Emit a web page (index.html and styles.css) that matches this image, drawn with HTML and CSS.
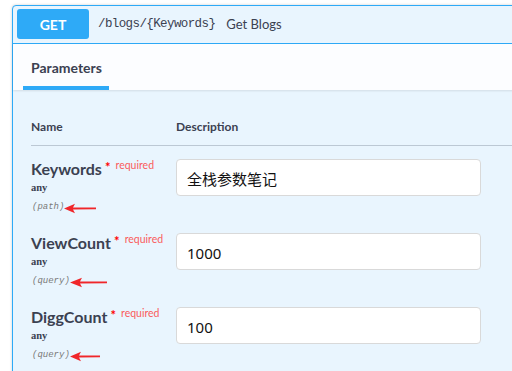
FILE: index.html
```html
<!DOCTYPE html>
<html>
<head>
<meta charset="utf-8">
<link rel="stylesheet" href="styles.css">
</head>
<body>
<div class="page">
  <div class="opblock">
    <div class="summary">
      <span class="method">GET</span>
      <span class="path">/blogs/{Keywords}</span>
      <span class="desc">Get Blogs</span>
    </div>
    <div class="tabs">
      <div class="tab">Parameters</div>
    </div>
    <div class="params">
      <div class="phead">
        <div class="col-name">Name</div>
        <div class="col-desc">Description</div>
      </div>
      <div class="rows">
        <div class="prow">
          <div class="pname">
            <div class="nm">Keywords<span class="star">&nbsp;*</span><span class="req">required</span></div>
            <div class="type">any</div>
            <div class="in">(path)<svg class="arrow" width="32" height="11" viewBox="0 0 32 11"><path d="M0 5.5 L11 0.8 L9 4.4 L32 4.6 L32 6.2 L9 6.6 L11 10.2 Z" fill="#f0262a"/></svg></div>
          </div>
          <div class="pval"><input class="field" type="text" value="全栈参数笔记"></div>
        </div>
        <div class="prow">
          <div class="pname">
            <div class="nm">ViewCount<span class="star">&nbsp;*</span><span class="req">required</span></div>
            <div class="type">any</div>
            <div class="in">(query)<svg class="arrow" width="37" height="11" viewBox="0 0 37 11"><path d="M0 5.5 L12 0.8 L10 4.4 L37 4.6 L37 6.2 L10 6.6 L12 10.2 Z" fill="#f0262a"/></svg></div>
          </div>
          <div class="pval"><input class="field" type="text" value="1000"></div>
        </div>
        <div class="prow">
          <div class="pname">
            <div class="nm">DiggCount<span class="star">&nbsp;*</span><span class="req">required</span></div>
            <div class="type">any</div>
            <div class="in">(query)<svg class="arrow" width="30" height="11" viewBox="0 0 30 11"><path d="M0 5.5 L11 0.8 L9 4.4 L30 4.6 L30 6.2 L9 6.6 L11 10.2 Z" fill="#f0262a"/></svg></div>
          </div>
          <div class="pval"><input class="field" type="text" value="100"></div>
        </div>
      </div>
    </div>
  </div>
</div>
</body>
</html>
```
FILE: styles.css
```css
html, body {
  margin: 0;
  padding: 0;
  background: #ffffff;
  overflow: hidden;
}
body {
  font-family: Lato, "Noto Sans", sans-serif;
  color: #3b4151;
}
.page {
  padding: 5px 0 0 12px;
  width: 620px;
}
.opblock {
  border: 1px solid #2eaaf7;
  border-radius: 4px 0 0 0;
  background: #e9f5fe;
  box-shadow: 0 0 3px rgba(0, 0, 0, 0.19);
  height: 400px;
}
.summary {
  display: flex;
  align-items: center;
  padding: 3px 4px 4px 3px;
  border-bottom: 1px solid #2eaaf7;
  height: 30px;
}
.method {
  width: 72px;
  height: 30px;
  background: #2eaaf7;
  border-radius: 3px;
  color: #ffffff;
  font-weight: 700;
  font-size: 14px;
  display: flex;
  align-items: center;
  justify-content: center;
  margin-left: 1px;
}
.path {
  font-family: "Liberation Mono", monospace;
  font-size: 12.5px;
  color: #3b4151;
  margin-left: 9px;
  letter-spacing: -0.6px;
}
.desc {
  font-size: 13px;
  margin-left: 11px;
}
.tabs {
  background: #fcfdff;
  display: flex;
  padding-left: 10px;
  box-shadow: 0 1px 2px rgba(0, 0, 0, 0.1);
  position: relative;
}
.tab {
  font-size: 14px;
  font-weight: 700;
  line-height: 20px;
  padding: 14px 7px 8px 8px;
  border-bottom: 4px solid #2eaaf7;
}
.params {
  padding: 29px 0 0 18px;
}
.phead {
  display: flex;
  font-size: 12px;
  font-weight: 700;
  line-height: 16px;
  padding-bottom: 10px;
  border-bottom: 1px solid #bcc8d4;
}
.col-name {
  width: 145px;
}
.rows {
  padding-top: 9px;
}
.prow {
  display: flex;
  height: 74px;
}
.pname {
  width: 145px;
}
.nm {
  font-size: 16px;
  font-weight: 700;
  line-height: 20px;
  white-space: nowrap;
}
.star {
  color: #ff0000;
  font-size: 13px;
  vertical-align: 3px;
}
.req {
  color: #fa5c5c;
  font-size: 10.5px;
  font-weight: 400;
  padding-left: 5px;
  vertical-align: 6px;
}
.type {
  font-family: "Liberation Serif", serif;
  font-weight: 700;
  font-size: 10.5px;
  line-height: 12px;
  margin-top: 3px;
}
.in {
  font-family: "Liberation Mono", monospace;
  font-style: italic;
  font-size: 9px;
  color: #7a7a7a;
  line-height: 12px;
  margin-top: 6px;
  margin-left: 1px;
  display: flex;
  align-items: center;
}
.arrow {
  margin-left: 0;
  margin-top: 3px;
}
.pval {
  padding-top: 4px;
}
.field {
  box-sizing: border-box;
  width: 305px;
  height: 37px;
  border: 1px solid #d9d9d9;
  border-radius: 4px;
  background: #ffffff;
  padding: 2px 10px 0;
  font-family: "Noto Sans", "Noto Sans CJK SC", sans-serif;
  font-size: 15px;
  color: #111111;
  margin: 0;
  outline: none;
}
```
